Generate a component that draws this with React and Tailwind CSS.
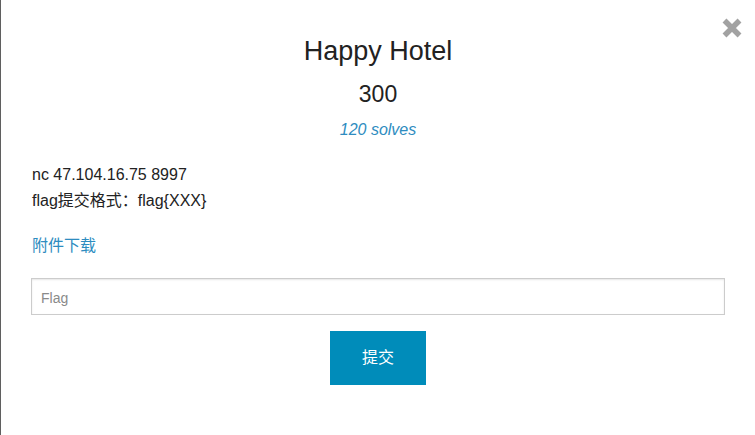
export default function App() {
  return (
    <div
      className="relative h-[435px] w-full overflow-hidden border-l border-[#5f5f5f] bg-white text-[#222]"
      style={{ fontFamily: '"Liberation Sans", Arial, "Noto Sans CJK SC", sans-serif' }}
    >
      <button className="absolute right-[13px] top-[18px] h-[20px] w-[20px]" aria-label="close">
        <svg viewBox="0 0 20 20" width="20" height="20">
          <path d="M2.5 2.5 L17.5 17.5 M17.5 2.5 L2.5 17.5" stroke="#a2a2a2" strokeWidth="5.5" strokeLinecap="butt" />
        </svg>
      </button>

      <div className="flex flex-col pl-[30px] pr-[30px] pt-[36px]">
        <h3 className="text-center text-[27px] leading-[30px] text-[#222]">Happy Hotel</h3>
        <h4 className="mt-[13px] text-center text-[23px] leading-[30px] text-[#222]">300</h4>
        <p className="mt-[9px] text-center text-[16px] italic leading-[24px] text-[#2e8cc0]">120 solves</p>

        <div className="mt-[20px] pl-[1px] text-[16px] leading-[26px] text-[#222]">
          <p>nc 47.104.16.75 8997</p>
          <p>flag提交格式：flag{"{"}XXX{"}"}</p>
        </div>

        <a className="mt-[19px] block pl-[1px] text-[16px] leading-[26px] text-[#2e8cc0]" href="#">
          附件下载
        </a>

        <input
          className="mt-[19px] h-[37px] w-full border border-[#cccccc] px-[9px] pt-[3px] text-[14px] text-[#333] shadow-[inset_0_1px_2px_rgba(0,0,0,0.1)] outline-none placeholder:text-[#8a8a8a]"
          placeholder="Flag"
        />

        <div className="mt-[16px] flex justify-center">
          <button className="h-[54px] w-[96px] bg-[#008cba] text-[16px] text-white">提交</button>
        </div>
      </div>
    </div>
  );
}
